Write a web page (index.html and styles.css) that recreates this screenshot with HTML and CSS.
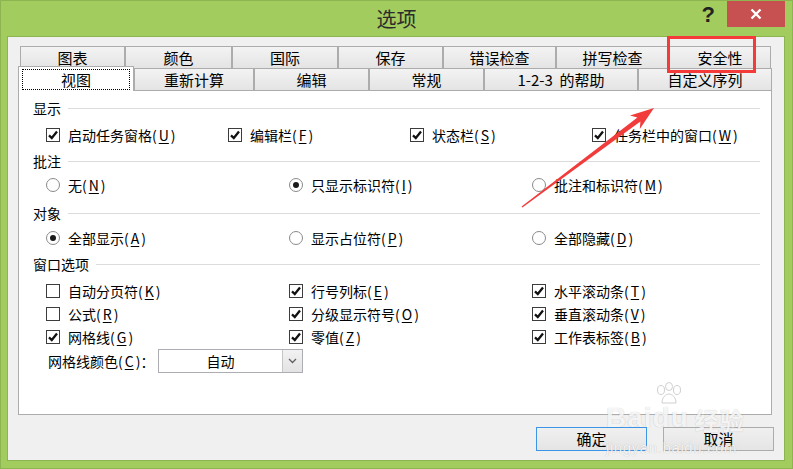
FILE: index.html
```html
<!DOCTYPE html>
<html lang="zh-CN">

<head>
    <meta charset="UTF-8">
    <title>选项</title>
    <link rel="stylesheet" href="styles.css">
</head>

<body>
    <div class="window">
        <div class="titlebar">
            <div></div>
            <div class="title">选项</div>
            <div class="controls">
                <span class="help">?</span>
                <span class="close">
                    <svg width="12" height="12" viewBox="0 0 12 12"><path d="M1.5 1.5 L10.5 10.5 M10.5 1.5 L1.5 10.5" stroke="#fff" stroke-width="2.4" /></svg>
                </span>
            </div>
        </div>

        <div class="client">
            <div class="tabrow back">
                <div class="tab">图表</div>
                <div class="tab">颜色</div>
                <div class="tab">国际</div>
                <div class="tab">保存</div>
                <div class="tab">错误检查</div>
                <div class="tab">拼写检查</div>
                <div class="tab">安全性</div>
            </div>
            <div class="tabrow front">
                <div class="tab active"><div class="focus">视图</div></div>
                <div class="tab">重新计算</div>
                <div class="tab">编辑</div>
                <div class="tab">常规</div>
                <div class="tab">1-2-3 &nbsp;的帮助</div>
                <div class="tab">自定义序列</div>
            </div>

            <div class="panel">
                <div class="group-title first">显示</div>
                <div class="opts four row-a">
                    <label class="opt"><span class="box on"></span><span>启动任务窗格(<u>U</u>)</span></label>
                    <label class="opt"><span class="box on"></span><span>编辑栏(<u>F</u>)</span></label>
                    <label class="opt"><span class="box on"></span><span>状态栏(<u>S</u>)</span></label>
                    <label class="opt"><span class="box on"></span><span>任务栏中的窗口(<u>W</u>)</span></label>
                </div>

                <div class="group-title g-b">批注</div>
                <div class="opts three row-b">
                    <label class="opt"><span class="radio"></span><span>无(<u>N</u>)</span></label>
                    <label class="opt"><span class="radio on"></span><span>只显示标识符(<u>I</u>)</span></label>
                    <label class="opt"><span class="radio"></span><span>批注和标识符(<u>M</u>)</span></label>
                </div>

                <div class="group-title g-c">对象</div>
                <div class="opts three row-c">
                    <label class="opt"><span class="radio on"></span><span>全部显示(<u>A</u>)</span></label>
                    <label class="opt"><span class="radio"></span><span>显示占位符(<u>P</u>)</span></label>
                    <label class="opt"><span class="radio"></span><span>全部隐藏(<u>D</u>)</span></label>
                </div>

                <div class="group-title g-d">窗口选项</div>
                <div class="opts three grid-rows">
                    <label class="opt"><span class="box"></span><span>自动分页符(<u>K</u>)</span></label>
                    <label class="opt"><span class="box on"></span><span>行号列标(<u>E</u>)</span></label>
                    <label class="opt"><span class="box on"></span><span>水平滚动条(<u>T</u>)</span></label>
                    <label class="opt"><span class="box"></span><span>公式(<u>R</u>)</span></label>
                    <label class="opt"><span class="box on"></span><span>分级显示符号(<u>O</u>)</span></label>
                    <label class="opt"><span class="box on"></span><span>垂直滚动条(<u>V</u>)</span></label>
                    <label class="opt"><span class="box on"></span><span>网格线(<u>G</u>)</span></label>
                    <label class="opt"><span class="box on"></span><span>零值(<u>Z</u>)</span></label>
                    <label class="opt"><span class="box on"></span><span>工作表标签(<u>B</u>)</span></label>
                </div>

                <div class="color-row">
                    <span class="color-label">网格线颜色(<u>C</u>)：</span>
                    <div class="select">
                        <span class="select-value">自动</span>
                        <span class="select-btn">
                            <svg width="9" height="6" viewBox="0 0 9 6"><path d="M1 1 L4.5 4.5 L8 1" stroke="#606060" stroke-width="1.3" fill="none" /></svg>
                        </span>
                    </div>
                </div>
            </div>

            <div class="actions">
                <button class="btn default">确定</button>
                <button class="btn">取消</button>
            </div>
        </div>

        <!-- annotation drawn over the dialog -->
        <div class="mark-box"></div>
        <svg class="arrow" width="793" height="469" viewBox="0 0 793 469">
            <polygon points="521.6,206.5 637.4,117.6 630,115.6 654,108 639.8,129 640.4,121.4 522.4,207.5" fill="#f23c3c" />
        </svg>

        <div class="watermark">
            <div class="wm-logo">
                <span>Bai</span>
                <svg class="paw" width="34" height="24" viewBox="0 0 34 24">
                    <g fill="#fff" stroke="#d0d0d0" stroke-width="1">
                        <ellipse cx="8" cy="8" rx="3.5" ry="4.5" />
                        <ellipse cx="16" cy="4.5" rx="3.5" ry="4" />
                        <ellipse cx="24" cy="8" rx="3.5" ry="4.5" />
                        <path d="M9 21 C9 15 13 12 16 12 C19 12 23 15 23 21 Z" />
                    </g>
                </svg>
                <span>du</span>
                <span class="wm-cn">经验</span>
            </div>
            <div class="wm-url">jingyan.baidu.com</div>
        </div>
    </div>
</body>

</html>
```

FILE: styles.css
```css
body {
    margin: 0;
    font-family: "Noto Sans CJK SC", sans-serif;
    color: #000;
}

.window {
    position: relative;
    width: 793px;
    height: 469px;
    background: #a3cc5f;
    box-shadow: inset 0 0 0 1px #8db451;
    display: flex;
    flex-direction: column;
    overflow: hidden;
}

/* title bar */
.titlebar {
    height: 37px;
    display: grid;
    grid-template-columns: 1fr auto 1fr;
}

.title {
    font-size: 20px;
    line-height: 37px;
    color: #2b2b2b;
}

.controls {
    display: flex;
    justify-content: flex-end;
    align-items: flex-start;
    padding-right: 8px;
}

.help {
    font: bold 22px/1 "Liberation Sans", sans-serif;
    color: #222;
    margin-top: 4px;
    margin-right: 12px;
}

.close {
    width: 58px;
    height: 26px;
    margin-top: 1px;
    background: #c75050;
    display: flex;
    align-items: center;
    justify-content: center;
}

/* client area */
.client {
    flex: 1;
    margin: 0 9px 9px 8px;
    padding: 9px 0 0 10px;
    background: #f0f0f0;
    box-shadow: 0 0 0 1px #8db451;
}

.tabrow {
    display: grid;
    height: 22px;
}

.tabrow.back {
    margin-left: 2px;
    grid-template-columns: 105px 107px 106px 105px 113px 113px 102px;
}

.tabrow.front {
    grid-template-columns: 116px 120px 115px 115px 154px 134px;
}

.tab {
    box-sizing: border-box;
    height: 22px;
    border: 1px solid #acacac;
    border-bottom: 0;
    background: linear-gradient(#f3f3f3, #e4e4e4);
    font-size: 15px;
    line-height: 21px;
    text-align: center;
    white-space: nowrap;
}

.tab.active {
    position: relative;
    z-index: 1;
    height: 25px;
    margin: -2px 0 -1px;
    padding: 2px 3px 1px;
    background: #fff;
}

.focus {
    border: 1px dotted #000;
    line-height: 19px;
}

.panel {
    box-sizing: border-box;
    width: 754px;
    height: 325px;
    background: #fff;
    border: 1px solid #acacac;
    padding: 7px 11px 0 14px;
    font-size: 14px;
}

.group-title {
    display: flex;
    align-items: center;
    gap: 7px;
    height: 20px;
    line-height: 20px;
}

.group-title::after {
    content: "";
    flex: 1;
    height: 1px;
    background: #dcdcdc;
}

.g-b { margin-top: 5px; }
.g-c { margin-top: 7px; }
.g-d { margin-top: 5px; }

.opts {
    display: grid;
    margin-left: 13px;
    grid-auto-rows: 22px;
}

.opts.four { grid-template-columns: repeat(4, 182px); }
.opts.three { grid-template-columns: repeat(3, 243px); }

.row-a { margin-top: 6px; }
.row-b { margin-top: 3px; }
.row-c { margin-top: 4px; }

.grid-rows {
    margin-top: 5px;
    grid-auto-rows: 23px;
}

.opt {
    display: flex;
    align-items: center;
    gap: 8px;
    white-space: nowrap;
}

.opt u,
.color-label u {
    margin: 0 2px;
    text-underline-offset: 2px;
}

.box {
    box-sizing: border-box;
    width: 14px;
    height: 14px;
    border: 1px solid #3c3c3c;
    background: #fff;
    flex-shrink: 0;
}

.box.on {
    background: #fff url("data:image/svg+xml,%3Csvg xmlns='http://www.w3.org/2000/svg' viewBox='0 0 12 12'%3E%3Cpath d='M2 6.3 L4.8 9 L10 2.6' stroke='%23111' stroke-width='2.3' fill='none'/%3E%3C/svg%3E") center / 12px 12px no-repeat;
}

.radio {
    box-sizing: border-box;
    width: 14px;
    height: 14px;
    border: 1px solid #8a8a8a;
    border-radius: 50%;
    background: #fff;
    flex-shrink: 0;
    display: flex;
    align-items: center;
    justify-content: center;
}

.radio.on::after {
    content: "";
    width: 6px;
    height: 6px;
    border-radius: 50%;
    background: #1a1a1a;
}

.color-row {
    display: flex;
    align-items: center;
    margin-top: 1px;
    margin-left: 15px;
    height: 24px;
}

.color-label {
    width: 110px;
    white-space: nowrap;
}

.select {
    box-sizing: border-box;
    width: 145px;
    height: 24px;
    border: 1px solid #abadb3;
    display: flex;
}

.select-value {
    flex: 1;
    text-align: center;
    line-height: 22px;
}

.select-btn {
    width: 19px;
    border-left: 1px solid #c6c6c6;
    background: linear-gradient(#f2f2f2, #e3e3e3);
    display: flex;
    align-items: center;
    justify-content: center;
}

.actions {
    display: flex;
    justify-content: flex-end;
    gap: 16px;
    margin-top: 12px;
    padding-right: 10px;
}

.btn {
    box-sizing: border-box;
    width: 111px;
    height: 24px;
    border: 1px solid #acacac;
    background: linear-gradient(#f0f0f0, #e5e5e5);
    font-family: "Noto Sans CJK SC", sans-serif;
    font-size: 15px;
    line-height: 20px;
    padding: 0;
    color: #000;
}

.btn.default {
    border-color: #3d95e8;
}

/* annotation overlays */
.mark-box {
    position: absolute;
    left: 667px;
    top: 36px;
    width: 89px;
    height: 37px;
    box-sizing: border-box;
    border: 3px solid #f53a3a;
}

.arrow {
    position: absolute;
    left: 0;
    top: 0;
    pointer-events: none;
}

.watermark {
    position: absolute;
    left: 606px;
    top: 382px;
    pointer-events: none;
    color: rgba(255, 255, 255, 0.85);
    text-shadow: 0 0 1px rgba(0, 0, 0, 0.25);
}

.wm-logo {
    display: flex;
    align-items: flex-end;
    font: bold 28px/1 "Liberation Sans", sans-serif;
    letter-spacing: 1px;
}

.paw {
    margin: 0 -34px 26px 0;
}

.wm-cn {
    font-family: "Noto Sans CJK SC", sans-serif;
    font-size: 24px;
    margin-left: 6px;
}

.wm-url {
    font: 15px/1 "Liberation Sans", sans-serif;
    margin-top: 8px;
    letter-spacing: 0.6px;
}
```
